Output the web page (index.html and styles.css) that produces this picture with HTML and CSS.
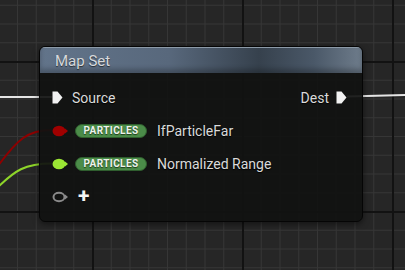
FILE: index.html
```html
<!DOCTYPE html>
<html lang="en">
<head>
  <meta charset="UTF-8">
  <title>Map Set</title>
  <link rel="stylesheet" href="styles.css">
</head>
<body>
  <div class="graph">
    <svg class="wires" width="405" height="270" viewBox="0 0 405 270">
      <path d="M0 97 L52 97" stroke="#e6e6e6" stroke-width="2" fill="none"/>
      <path d="M347 96.5 C370 96, 390 95.5, 405 95" stroke="#e6e6e6" stroke-width="2" fill="none"/>
      <path d="M52 130 C28 130, 18 138, -5 170" stroke="#8e0000" stroke-width="2" fill="none"/>
      <path d="M52 163.5 C25 163.5, 15 170, -5 190" stroke="#8ed52a" stroke-width="2" fill="none"/>
    </svg>

    <div class="node">
      <div class="node__header">Map Set</div>
      <div class="node__body">
        <div class="row">
          <div class="exec">
            <svg width="11" height="13" viewBox="0 0 11 13"><path d="M0.5 0.5 H5.5 L10.5 6.5 L5.5 12.5 H0.5 Z" fill="#f2f2f2"/></svg>
          </div>
          <span class="label">Source</span>
          <span class="label label--right">Dest</span>
          <div class="exec exec--out">
            <svg width="11" height="13" viewBox="0 0 11 13"><path d="M0.5 0.5 H5.5 L10.5 6.5 L5.5 12.5 H0.5 Z" fill="#f2f2f2"/></svg>
          </div>
        </div>
        <div class="row">
          <div class="pin">
            <svg width="16" height="12" viewBox="0 0 16 12"><ellipse cx="7" cy="6" rx="6.5" ry="5.3" fill="#a00000"/><path d="M13 3.5 L16 6 L13 8.5 Z" fill="#a00000"/></svg>
          </div>
          <span class="badge">PARTICLES</span>
          <span class="label">IfParticleFar</span>
        </div>
        <div class="row">
          <div class="pin">
            <svg width="16" height="12" viewBox="0 0 16 12"><ellipse cx="7" cy="6" rx="6.5" ry="5.3" fill="#9be634"/><path d="M13 3.5 L16 6 L13 8.5 Z" fill="#9be634"/></svg>
          </div>
          <span class="badge">PARTICLES</span>
          <span class="label">Normalized Range</span>
        </div>
        <div class="row">
          <div class="pin">
            <svg width="16" height="12" viewBox="0 0 16 12"><ellipse cx="7" cy="6" rx="5.5" ry="4.2" fill="none" stroke="#8a8a8a" stroke-width="2"/><path d="M13 3.5 L16 6 L13 8.5 Z" fill="#8a8a8a"/></svg>
          </div>
          <span class="plus">+</span>
        </div>
      </div>
    </div>
  </div>
</body>
</html>
```

FILE: styles.css
```css
* {
  margin: 0;
  box-sizing: border-box;
}

body {
  margin: 0;
  background-color: #262626;
  font-family: "Roboto", "Liberation Sans", sans-serif;
  overflow: hidden;
}

.graph {
  position: relative;
  width: 405px;
  height: 270px;
  background-color: #262626;
  background-image:
    linear-gradient(to right, #121212 0, #121212 2px, transparent 2px),
    linear-gradient(to bottom, #121212 0, #121212 2px, transparent 2px),
    linear-gradient(to right, #363636 0, #363636 1px, transparent 1px),
    linear-gradient(to bottom, #363636 0, #363636 1px, transparent 1px);
  background-size: 150px 150px, 150px 150px, 18.75px 18.75px, 18.75px 18.75px;
  background-position: 92px 0, 0 61px, 92px 0, 0 61px;
}

.wires {
  position: absolute;
  left: 0;
  top: 0;
}

.node {
  position: absolute;
  left: 39px;
  top: 46px;
  width: 324px;
  height: 176px;
  border: 1px solid #050505;
  border-radius: 6px;
  background-color: rgba(17, 18, 17, 0.93);
  box-shadow: 0 2px 6px rgba(0, 0, 0, .5);
  overflow: hidden;
}

.node__header {
  height: 26px;
  padding: 4px 0 0 15px;
  font-size: 15px;
  color: #d6d9dc;
  text-shadow: 0 1px 1px rgba(0, 0, 0, .6);
  background: linear-gradient(to right, #62748a 0%, #58687c 40%, #36414d 68%, #4a5868 85%, #6e7c8b 100%);
  border-top: 1px solid #8c9aa8;
  box-shadow: inset 0 -4px 5px rgba(0, 0, 0, .25);
}

.node__body {
  padding: 8px 15px 0 12px;
}

.row {
  display: flex;
  align-items: center;
  height: 33px;
}

.exec {
  display: flex;
  width: 11px;
  margin-right: 9px;
}

.exec--out {
  margin: 0 0 0 7px;
}

.pin {
  display: flex;
  width: 16px;
  margin-right: 7px;
}

.label {
  font-size: 14px;
  color: #dadada;
  text-shadow: 0 1px 1px #000;
}

.label--right {
  margin-left: auto;
}

.badge {
  width: 72px;
  height: 14px;
  margin-right: 10px;
  border-radius: 7px;
  background-color: #4b8c49;
  border: 1px solid #2f5e2e;
  color: #eef3ec;
  font-size: 10px;
  font-weight: 700;
  line-height: 12px;
  text-align: center;
  letter-spacing: .4px;
  text-shadow: 0 1px 1px #1b3a1a;
}

.plus {
  margin-left: 3px;
  font-size: 21px;
  font-weight: 700;
  line-height: 1;
  color: #f4f4f4;
}
```
